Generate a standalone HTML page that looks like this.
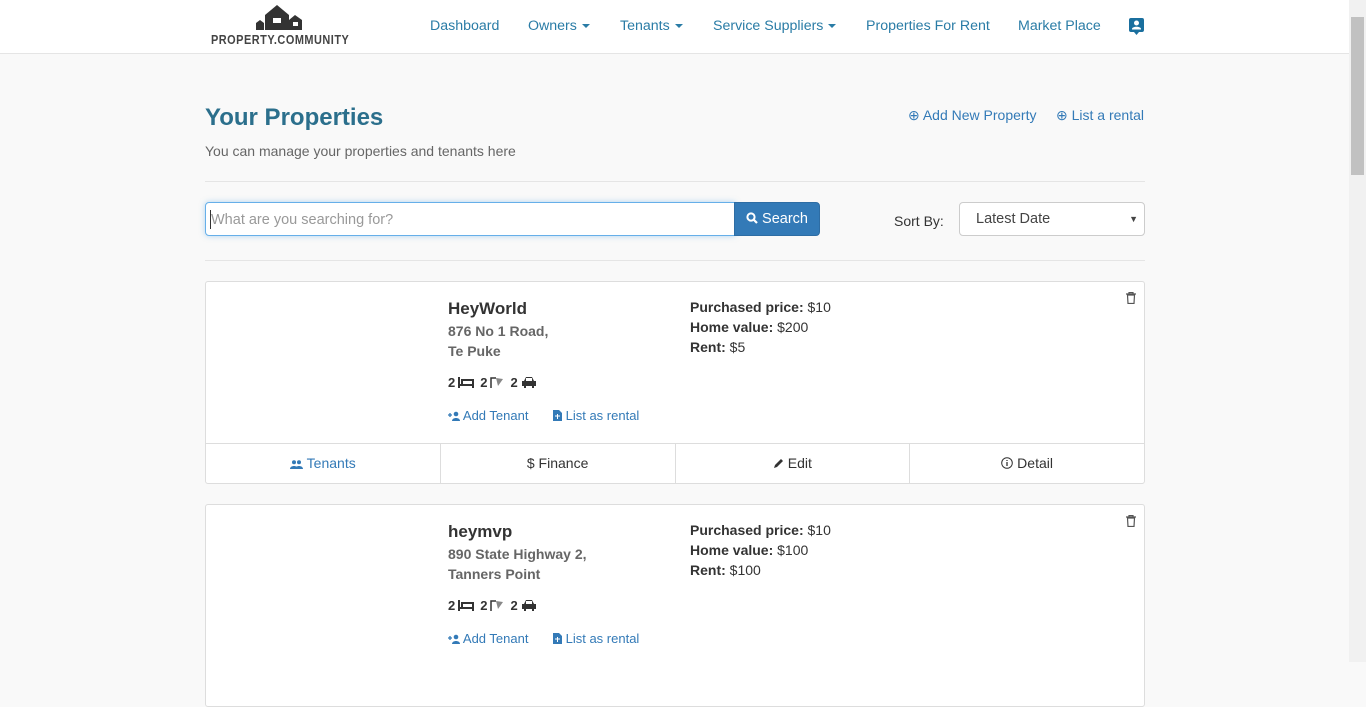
<!DOCTYPE html>
<html><head><meta charset="utf-8"><style>
*{box-sizing:border-box;margin:0;padding:0}
body{width:1366px;height:662px;overflow:hidden;background:#f9f9f9;font-family:"Liberation Sans",Arial,sans-serif;font-size:14px;color:#333;position:relative}
.a{position:absolute;white-space:nowrap}
.nav{position:absolute;left:0;top:0;width:1349px;height:54px;background:#fff;border-bottom:1px solid #e5e5e5}
.nl{color:#2a7ca6;font-size:14.2px;top:18px}
.car{display:inline-block;border-top:4px solid #2a7ca6;border-left:4px solid transparent;border-right:4px solid transparent;vertical-align:middle;margin-left:5px}
.link{color:#337ab7}
.card{position:absolute;left:205px;width:940px;background:#fff;border:1px solid #ddd;border-radius:3px}
.foot{position:absolute;left:0;right:0;top:161px;height:41px;border-top:1px solid #ddd;display:flex}
.foot div{flex:1;border-right:1px solid #ddd;text-align:center;line-height:39px;font-size:14px;color:#333}
.foot div:last-child{border-right:none}
b{font-weight:bold}
.sb{position:absolute;left:1349px;top:0;width:17px;height:662px;background:#f1f1f1}
svg{vertical-align:-1px}
.am svg{margin:0 6px 0 3px}
</style></head><body>
<div class="nav">
 <svg class="a" style="left:256px;top:3px" width="47" height="27" viewBox="0 0 47 27"><path d="M0 27V20l4-3 4 3v7zM9 27V12L21 2l12 10v15zM33 27V17l6-5 7 5v10z" fill="#333"/><rect x="17" y="15" width="8" height="5" fill="#fff"/><rect x="37" y="19" width="5" height="4" fill="#fff"/></svg>
 <div class="a" style="left:211px;top:32px;font-size:13px;font-weight:bold;letter-spacing:0.6px;color:#444;transform:scaleX(0.84);transform-origin:left">PROPERTY.COMMUNITY</div>
 <div class="a nl" style="left:430px">Dashboard</div>
 <div class="a nl" style="left:528px">Owners<span class="car"></span></div>
 <div class="a nl" style="left:620px">Tenants<span class="car"></span></div>
 <div class="a nl" style="left:713px">Service Suppliers<span class="car"></span></div>
 <div class="a nl" style="left:866px">Properties For Rent</div>
 <div class="a nl" style="left:1018px">Market Place</div>
 <svg class="a" style="left:1129px;top:18px" width="15" height="17" viewBox="0 0 15 17"><rect width="15" height="14" rx="2" fill="#1a6f9e"/><path d="M5 14h5l-2.5 3z" fill="#1a6f9e"/><circle cx="7.5" cy="5" r="2.5" fill="#fff"/><path d="M3 11c0-3 9-3 9 0v0.5H3z" fill="#fff"/></svg>
</div>
<div class="sb"><div style="position:absolute;left:2px;top:17px;width:13px;height:158px;background:#c1c1c1"></div></div>

<div class="a" style="left:205px;top:104px;font-size:24px;font-weight:bold;color:#2b6f8c">Your Properties</div>
<div class="a" style="left:205px;top:143px;font-size:14px;color:#666">You can manage your properties and tenants here</div>
<div class="a link" style="left:908px;top:107px;font-size:14px">⊕ Add New Property</div>
<div class="a link" style="left:1056px;top:107px;font-size:14px">⊕ List a rental</div>
<div class="a" style="left:205px;top:181px;width:940px;border-top:1px solid #e5e5e5"></div>

<div class="a" style="left:205px;top:202px;width:530px;height:34px;background:#fff;border:1px solid #66afe9;border-radius:4px 0 0 4px;box-shadow:0 0 6px rgba(102,175,233,.5)"><span style="position:absolute;left:5px;top:9px;color:#999;font-size:14.5px">What are you searching for?</span><span style="position:absolute;left:4px;top:7px;width:1px;height:19px;background:#333"></span></div>
<div class="a" style="left:734px;top:202px;width:86px;height:34px;background:#337ab7;border:1px solid #2e6da4;border-radius:0 4px 4px 0;color:#fff;font-size:14.5px;line-height:33px;padding-left:11px"><svg width="12" height="12" viewBox="0 0 12 12"><circle cx="5" cy="5" r="3.6" stroke="#fff" stroke-width="2" fill="none"/><path d="M7.5 7.5l3.5 3.5" stroke="#fff" stroke-width="2.2"/></svg> Search</div>
<div class="a" style="left:894px;top:213px;font-size:14px">Sort By:</div>
<div class="a" style="left:959px;top:202px;width:186px;height:34px;background:#fff;border:1px solid #ccc;border-radius:4px;font-size:14.5px;line-height:33px;padding-left:16px;color:#444">Latest Date<span style="position:absolute;right:6px;top:0;font-size:9px">▼</span></div>
<div class="a" style="left:205px;top:260px;width:940px;border-top:1px solid #e5e5e5"></div>

<div class="card" style="top:281px;height:203px">
 <svg class="a" style="left:920px;top:10px" width="10" height="12" viewBox="0 0 10 12"><path d="M0 2h10M3 2V0.5h4V2M1.5 3h7l-.5 8.5h-6z" stroke="#555" fill="none" stroke-width="1.2"/></svg>
 <div class="a" style="left:242px;top:17px;font-size:17px;font-weight:bold;color:#333">HeyWorld</div>
 <div class="a" style="left:242px;top:39px;font-size:14px;font-weight:bold;color:#666;line-height:20px">876 No 1 Road,<br>Te Puke</div>
 <div class="a am" style="left:242px;top:93px;font-size:13px;font-weight:bold">2<svg width="16" height="11" viewBox="0 0 16 11"><path d="M1 0v11M1 8h15M15 8v3M4 3h11v5H4z" stroke="#333" stroke-width="2" fill="none"/></svg>2<svg width="14" height="12" viewBox="0 0 14 12"><path d="M1 12V2h5" stroke="#333" stroke-width="1.5" fill="none"/><path d="M6 2l7 1-5 7z" fill="#888"/></svg>2<svg width="16" height="12" viewBox="0 0 16 12"><path d="M3 5l2-4h6l2 4h2v5h-2v2h-2v-2H5v2H3v-2H1V5z" fill="#333"/><rect x="5" y="2" width="6" height="3" fill="#fff"/></svg></div>
 <div class="a link" style="left:242px;top:126px;font-size:13px"><svg width="12" height="10" viewBox="0 0 12 10"><path d="M0 4h4M2 2v4" stroke="#337ab7" stroke-width="1.3"/><circle cx="8" cy="3" r="2.3" fill="#337ab7"/><path d="M4 10c0-4 8-4 8 0z" fill="#337ab7"/></svg> Add Tenant</div>
 <div class="a link" style="left:347px;top:126px;font-size:13px"><svg width="9" height="11" viewBox="0 0 9 11"><path d="M0 0h6l3 3v8H0z" fill="#337ab7"/><path d="M2 6h5M4.5 4v5" stroke="#fff"/></svg> List as rental</div>
 <div class="a" style="left:484px;top:15px;font-size:14px;line-height:20px"><b>Purchased price:</b> $10<br><b>Home value:</b> $200<br><b>Rent:</b> $5</div>
 <div class="foot"><div style="color:#337ab7"><svg width="13" height="9" viewBox="0 0 13 9"><circle cx="4" cy="2.2" r="2" fill="#337ab7"/><circle cx="9" cy="2.2" r="2" fill="#337ab7"/><path d="M0 9c0-4 8-4 8 0zM5 9c0-4 8-4 8 0z" fill="#337ab7"/></svg> Tenants</div><div>$ Finance</div><div><svg width="11" height="11" viewBox="0 0 11 11"><path d="M1 10l1-3 6-6 2 2-6 6z" fill="#333"/></svg> Edit</div><div><svg width="12" height="12" viewBox="0 0 12 12"><circle cx="6" cy="6" r="5.3" stroke="#333" fill="none"/><path d="M6 5v4M6 3v1" stroke="#333" stroke-width="1.3"/></svg> Detail</div></div>
</div>

<div class="card" style="top:504px;height:203px">
 <svg class="a" style="left:920px;top:10px" width="10" height="12" viewBox="0 0 10 12"><path d="M0 2h10M3 2V0.5h4V2M1.5 3h7l-.5 8.5h-6z" stroke="#555" fill="none" stroke-width="1.2"/></svg>
 <div class="a" style="left:242px;top:17px;font-size:17px;font-weight:bold;color:#333">heymvp</div>
 <div class="a" style="left:242px;top:39px;font-size:14px;font-weight:bold;color:#666;line-height:20px">890 State Highway 2,<br>Tanners Point</div>
 <div class="a am" style="left:242px;top:93px;font-size:13px;font-weight:bold">2<svg width="16" height="11" viewBox="0 0 16 11"><path d="M1 0v11M1 8h15M15 8v3M4 3h11v5H4z" stroke="#333" stroke-width="2" fill="none"/></svg>2<svg width="14" height="12" viewBox="0 0 14 12"><path d="M1 12V2h5" stroke="#333" stroke-width="1.5" fill="none"/><path d="M6 2l7 1-5 7z" fill="#888"/></svg>2<svg width="16" height="12" viewBox="0 0 16 12"><path d="M3 5l2-4h6l2 4h2v5h-2v2h-2v-2H5v2H3v-2H1V5z" fill="#333"/><rect x="5" y="2" width="6" height="3" fill="#fff"/></svg></div>
 <div class="a link" style="left:242px;top:126px;font-size:13px"><svg width="12" height="10" viewBox="0 0 12 10"><path d="M0 4h4M2 2v4" stroke="#337ab7" stroke-width="1.3"/><circle cx="8" cy="3" r="2.3" fill="#337ab7"/><path d="M4 10c0-4 8-4 8 0z" fill="#337ab7"/></svg> Add Tenant</div>
 <div class="a link" style="left:347px;top:126px;font-size:13px"><svg width="9" height="11" viewBox="0 0 9 11"><path d="M0 0h6l3 3v8H0z" fill="#337ab7"/><path d="M2 6h5M4.5 4v5" stroke="#fff"/></svg> List as rental</div>
 <div class="a" style="left:484px;top:15px;font-size:14px;line-height:20px"><b>Purchased price:</b> $10<br><b>Home value:</b> $100<br><b>Rent:</b> $100</div>
</div>
</body></html>
